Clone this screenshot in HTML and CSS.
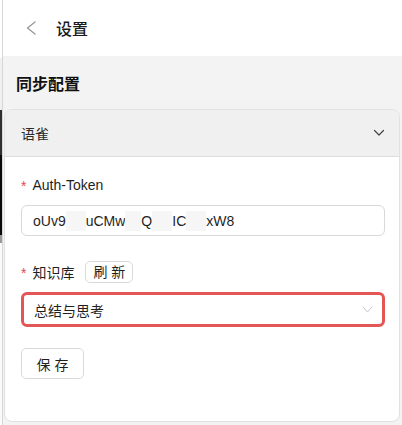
FILE: index.html
```html
<!DOCTYPE html>
<html lang="zh">
<head>
<meta charset="utf-8">
<title>设置</title>
<link rel="stylesheet" href="styles.css">
</head>
<body>
<div class="app">
  <div class="strip">
    <div class="s1"></div><div class="s2"></div><div class="s3"></div><div class="s4"></div><div class="s5"></div><div class="s6"></div>
  </div>
  <div class="panel">
    <header class="topbar">
      <svg class="back" width="12" height="14" viewBox="0 0 12 14"><path d="M10 1 L2.5 7 L10 13" fill="none" stroke="#9a9a9a" stroke-width="1.4" stroke-linecap="round" stroke-linejoin="round"/></svg>
      <span class="title">设置</span>
    </header>
    <main class="content">
      <h2 class="section">同步配置</h2>
      <div class="card">
        <div class="card-head">
          <span>语雀</span>
          <svg width="12" height="8" viewBox="0 0 12 8"><path d="M1.5 1.5 L6 6 L10.5 1.5" fill="none" stroke="#444" stroke-width="1.2" stroke-linecap="round" stroke-linejoin="round"/></svg>
        </div>
        <div class="card-body">
          <div class="field">
            <div class="label"><span class="req">*</span>Auth-Token</div>
            <div class="input">
              <span class="seg">oUv9</span><span class="mask k1"></span><span class="seg">uCMw</span><span class="mask k2"></span><span class="seg">Q</span><span class="mask k3"></span><span class="seg">IC</span><span class="mask k4"></span><span class="seg">xW8</span>
            </div>
          </div>
          <div class="field">
            <div class="label"><span class="req">*</span>知识库<button class="btn small">刷 新</button></div>
            <div class="select">
              <span>总结与思考</span>
              <svg width="11" height="7" viewBox="0 0 11 7"><path d="M1 1 L5.5 6 L10 1" fill="none" stroke="#c4c4c4" stroke-width="1" stroke-linecap="round" stroke-linejoin="round"/></svg>
            </div>
          </div>
          <div class="actions"><button class="btn save">保 存</button></div>
        </div>
      </div>
    </main>
  </div>
</div>
</body>
</html>
```
FILE: styles.css
```css
* { box-sizing: border-box; }
html, body { margin: 0; padding: 0; height: 100%; }
body {
  font-family: "Liberation Sans", "Noto Sans CJK SC", sans-serif;
  font-size: 14px;
  color: #1f1f1f;
  background: #f3f3f3;
}
.app { display: flex; height: 425px; overflow: hidden; }
.strip { width: 2px; display: flex; flex-direction: column; }
.strip .s1 { height: 58px; background: #fff; }
.strip .s2 { height: 52px; background: #f0f0f0; }
.strip .s3 { height: 45px; background: #2e2e33; }
.strip .s4 { height: 80px; background: #0a0a0a; }
.strip .s5 { height: 8px; background: #9a9a9a; }
.strip .s6 { flex: 1; background: #fafafa; }
.panel {
  flex: 1;
  border-left: 1px solid #d6d6d6;
  display: flex;
  flex-direction: column;
  background: #f3f3f3;
}
.topbar {
  height: 56px;
  background: #fff;
  display: flex;
  align-items: center;
  padding-left: 22px;
  gap: 19px;
}
.back { display: block; }
.title { font-size: 16px; font-weight: 500; color: #1a1a1a; }
.content { display: flex; flex-direction: column; padding: 0 2px 0 1px; }
.section {
  margin: 0;
  height: 53px;
  display: flex;
  align-items: center;
  padding-left: 12px;
  font-size: 16px;
  font-weight: 700;
  color: #111;
}
.card {
  background: #fff;
  border: 1px solid #e1e1e1;
  border-radius: 8px;
  overflow: hidden;
  height: 313px;
}
.card-head {
  height: 47px;
  background: #f0f0f0;
  border-bottom: 1px solid #dedede;
  display: flex;
  align-items: center;
  justify-content: space-between;
  padding: 0 14px 0 16px;
  color: #2a2a2a;
}
.card-body {
  padding: 17px 14px 0 16px;
  display: flex;
  flex-direction: column;
  gap: 25px;
}
.field { display: flex; flex-direction: column; gap: 9px; }
.label {
  height: 22px;
  display: flex;
  align-items: center;
  color: #1f1f1f;
}
.req { color: #e5484d; margin-right: 6px; font-size: 14px; position: relative; top: 1px; }
.input {
  height: 31px;
  border: 1px solid #d9d9d9;
  border-radius: 6px;
  display: flex;
  align-items: center;
  padding-left: 11px;
  color: #1f1f1f;
  font-size: 14px;
  white-space: nowrap;
}
.seg { display: inline-block; }
.mask { display: inline-block; height: 20px; background: #f6f6f6; }
.mask.k1 { width: 20px; }
.mask.k2 { width: 16px; }
.mask.k3 { width: 20px; }
.mask.k4 { width: 20px; }
.btn {
  font-family: inherit;
  font-size: 14px;
  color: #1f1f1f;
  background: #fff;
  border: 1px solid #d9d9d9;
  border-radius: 5px;
  cursor: pointer;
}
.btn.small { height: 22px; padding: 0 7px; margin-left: 11px; line-height: 20px; }
.select {
  height: 35px;
  border: 3px solid #e25656;
  border-radius: 6px;
  display: flex;
  align-items: center;
  justify-content: space-between;
  padding: 0 9px 0 10px;
  color: #1f1f1f;
}
.actions { display: flex; margin-top: -4px; }
.btn.save { height: 31px; width: 63px; padding: 0; }
```
